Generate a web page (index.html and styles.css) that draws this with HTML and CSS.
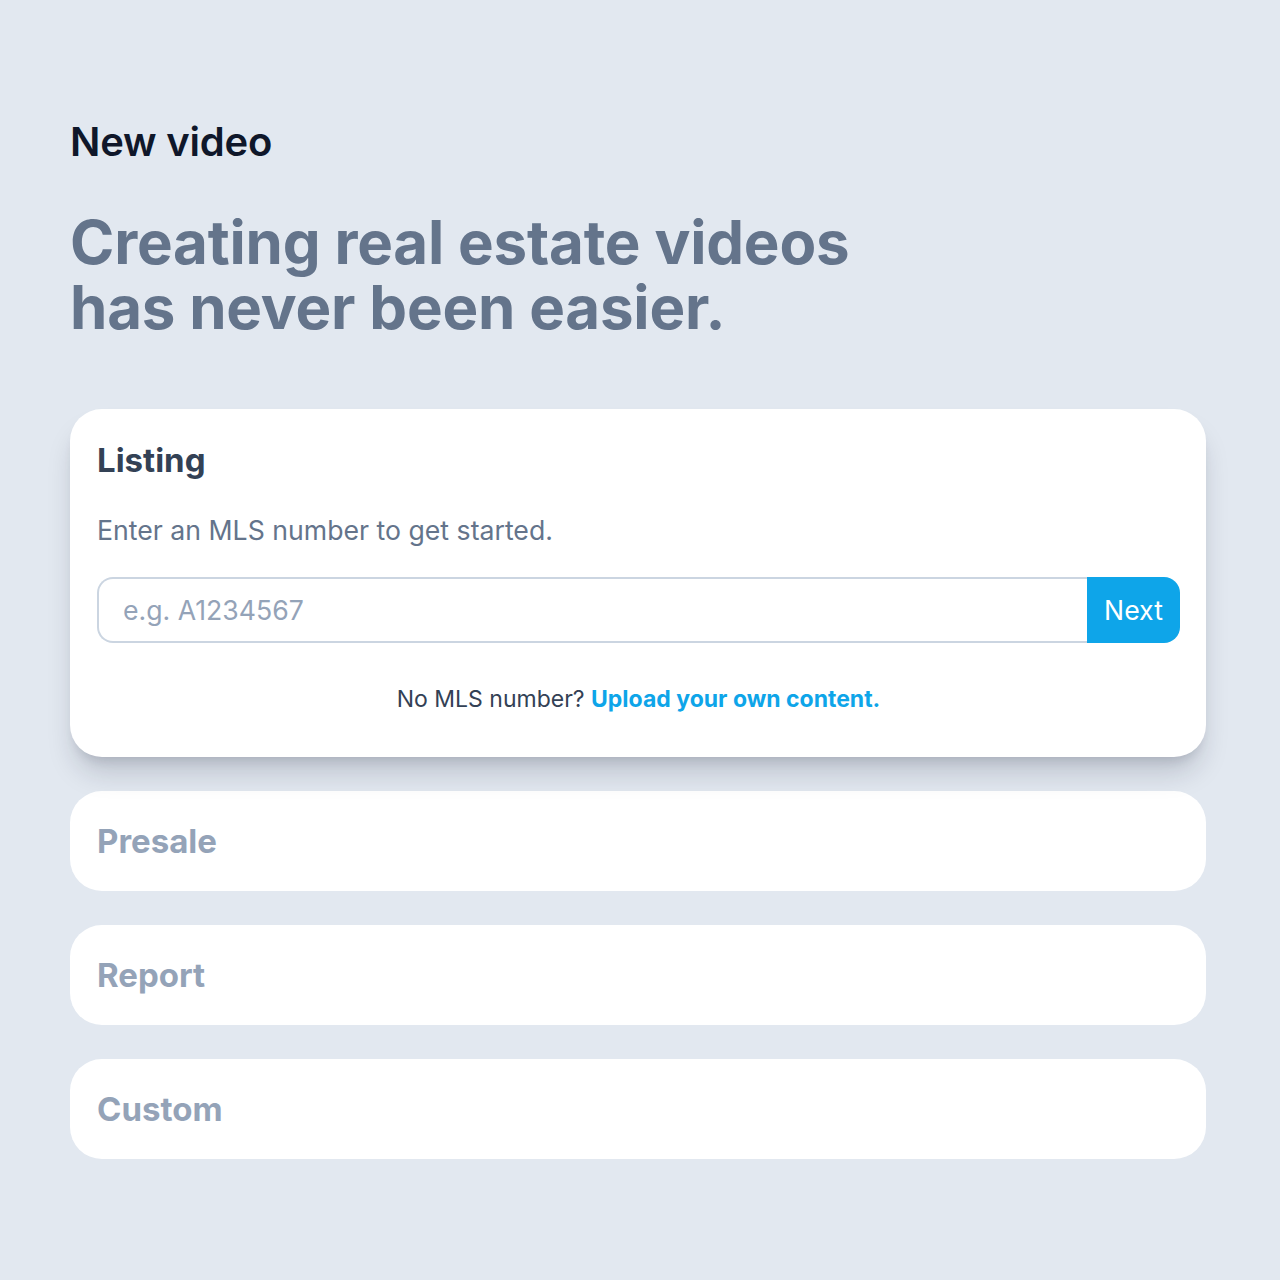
FILE: index.html
```html
<!DOCTYPE html>
<html lang="en">
<head>
<meta charset="utf-8">
<title>New video</title>
<link rel="stylesheet" href="styles.css">
</head>
<body>
<main class="page">
  <h1 class="page-title">New video</h1>
  <h2 class="headline">Creating real estate videos<br>has never been easier.</h2>

  <section class="card card-open">
    <h3 class="card-title">Listing</h3>
    <p class="card-desc">Enter an MLS number to get started.</p>
    <form class="mls-form">
      <input class="mls-input" type="text" placeholder="e.g. A1234567">
      <button class="mls-btn" type="button">Next</button>
    </form>
    <p class="card-foot">No MLS number? <a class="link" href="#">Upload your own content.</a></p>
  </section>

  <section class="card card-closed"><h3 class="card-title muted">Presale</h3></section>
  <section class="card card-closed"><h3 class="card-title muted">Report</h3></section>
  <section class="card card-closed"><h3 class="card-title muted">Custom</h3></section>
</main>
</body>
</html>
```
FILE: styles.css
```css
* { box-sizing: border-box; }
html, body { margin: 0; padding: 0; }
body {
  background: #e2e8f0;
  font-family: Inter, "Noto Sans", "Liberation Sans", sans-serif;
  min-height: 1280px;
}
.page {
  width: 1136px;
  margin-left: 70px;
  padding-top: 118px;
  display: flex;
  flex-direction: column;
}
.page-title {
  margin: 0;
  font-size: 40px;
  line-height: 48px;
  font-weight: 600;
  color: #0f172a;
  letter-spacing: -0.2px;
}
.headline {
  margin: 44px 0 0;
  font-size: 60px;
  line-height: 65px;
  font-weight: 700;
  color: #64748b;
  letter-spacing: -0.2px;
}
.card {
  background: #fff;
  border-radius: 32px;
  padding-left: 27px;
  padding-right: 26px;
}
.card-open {
  margin-top: 69px;
  padding-top: 31px;
  padding-bottom: 44px;
  box-shadow: 0 20px 28px -5px rgba(15, 23, 42, 0.18), 0 8px 12px -6px rgba(15, 23, 42, 0.14);
  position: relative;
  z-index: 1;
}
.card-closed {
  margin-top: 34px;
  padding-top: 30px;
  padding-bottom: 30px;
}
.card-title {
  margin: 0;
  font-size: 33px;
  line-height: 40px;
  font-weight: 700;
  color: #334155;
}
.card-title.muted { color: #94a3b8; }
.card-desc {
  margin: 34px 0 0;
  font-size: 26.67px;
  line-height: 32px;
  color: #64748b;
}
.mls-form {
  margin-top: 31px;
  display: flex;
  height: 66px;
}
.mls-input {
  flex: 1;
  min-width: 0;
  border: 2px solid #cbd5e1;
  border-right: none;
  border-radius: 16px 0 0 16px;
  padding: 0 24px;
  font-family: inherit;
  font-size: 26.67px;
  color: #334155;
  outline: none;
  background: #fff;
}
.mls-input::placeholder { color: #94a3b8; }
.mls-btn {
  width: 93px;
  border: none;
  background: #0ea5e9;
  color: #fff;
  font-family: inherit;
  font-size: 26.67px;
  border-radius: 0 16px 16px 0;
  padding: 0;
}
.card-foot {
  margin: 42px 0 0;
  text-align: center;
  font-size: 23px;
  line-height: 28px;
  color: #334155;
}
.link {
  color: #0ea5e9;
  font-weight: 700;
  text-decoration: none;
}
```
